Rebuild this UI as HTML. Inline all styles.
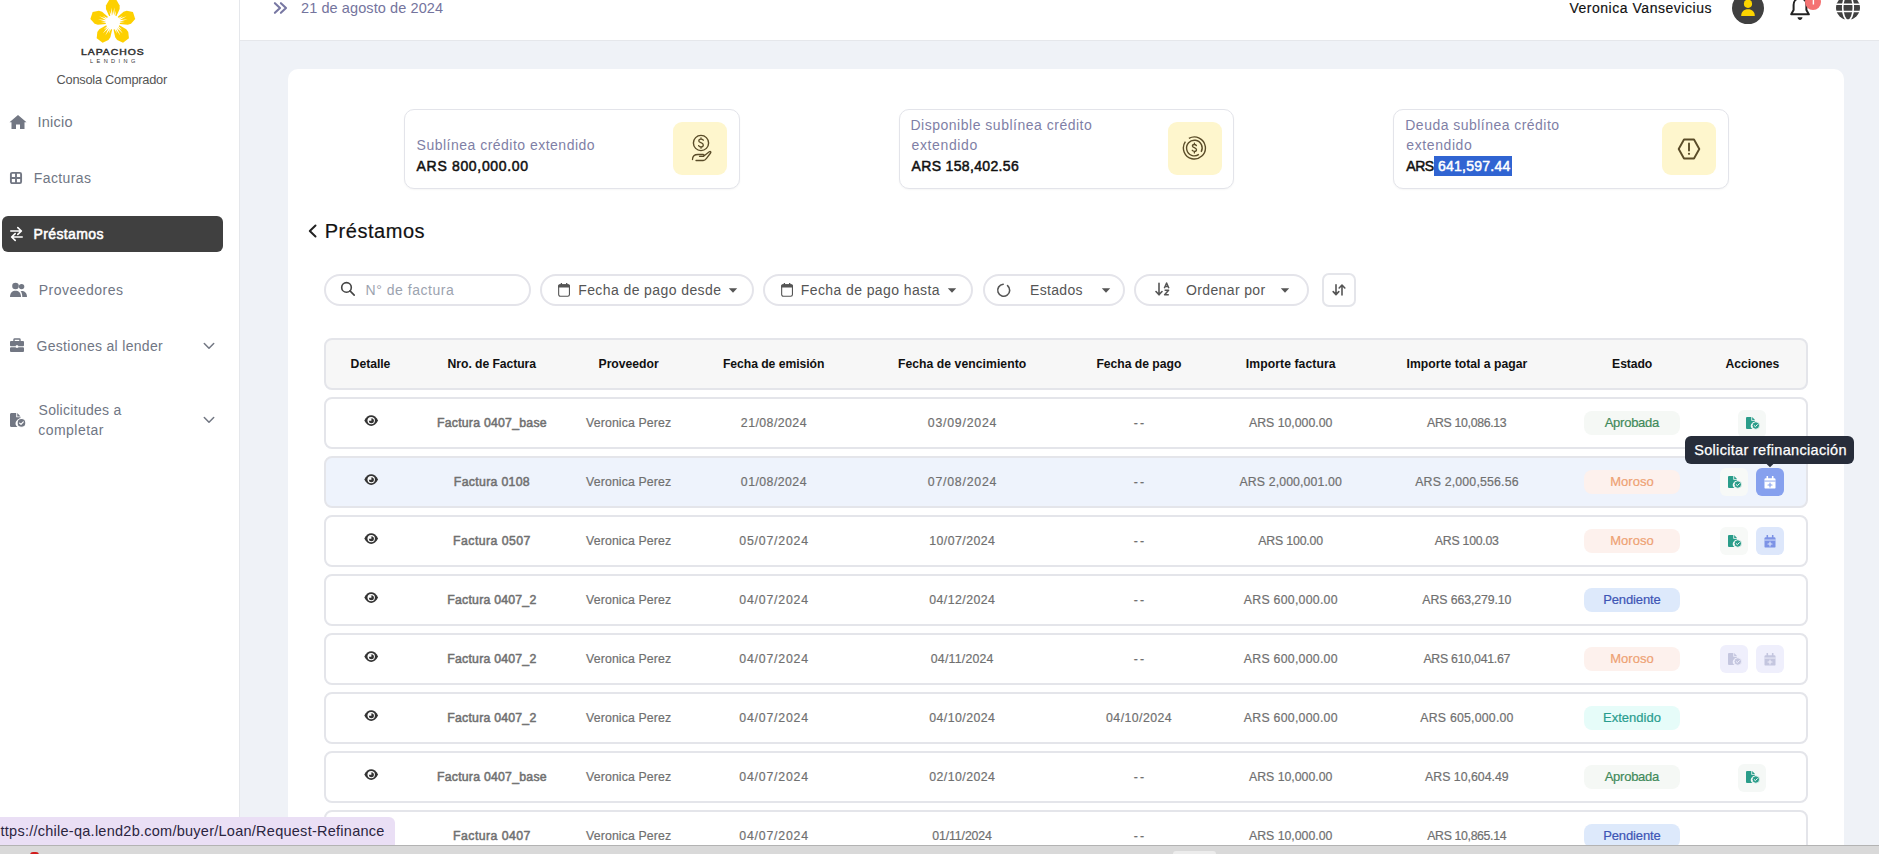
<!DOCTYPE html>
<html><head><meta charset="utf-8"><style>
*{box-sizing:border-box}
html,body{margin:0;padding:0}
body{width:1879px;height:854px;overflow:hidden;position:relative;background:#eff2f7;font-family:"Liberation Sans", sans-serif}
.t{position:absolute;white-space:nowrap}
.abs{position:absolute}
.row{position:absolute;left:324px;width:1484px;height:52px;border:2px solid #e4e5ea;border-radius:8px}
.badge{position:absolute;left:1584px;width:96px;height:24px;border-radius:8px}
.ab{position:absolute;width:28px;height:28px;border-radius:6px}
.pill{position:absolute;top:274px;height:32px;border:2px solid #e4e4ea;border-radius:16px;background:#fff}
.stat{position:absolute;top:109px;height:80px;border:1px solid #e3e4ea;border-radius:10px;background:#fff;box-shadow:0 1px 2px rgba(0,0,0,0.04)}
.ib{position:absolute;width:54px;height:53px;border-radius:9px;background:#fef6cd}
</style></head><body>
<div class="abs" style="left:0;top:0;width:240px;height:854px;background:#fff;border-right:1px solid #e5e7eb"></div>
<div class="abs" style="left:240px;top:0;width:1639px;height:41px;background:#fff;border-bottom:1px solid #e5e7eb"></div>
<div class="abs" style="left:288px;top:69px;width:1556px;height:900px;background:#fff;border-radius:10px"></div>
<svg style="position:absolute;left:0;top:0" width="240" height="50"><path d="M-3.8,-23.2 L3.8,-23.2 L7.1,-17.5 L7.1,-14 L3.6,-6 L-3.6,-6 L-7.1,-14 L-7.1,-17.5 Z" fill="#fdd000" transform="translate(112.8,22.4) rotate(0) scale(0.965)"/><path d="M-3.8,-23.2 L3.8,-23.2 L7.1,-17.5 L7.1,-14 L3.6,-6 L-3.6,-6 L-7.1,-14 L-7.1,-17.5 Z" fill="#fdd000" transform="translate(112.8,22.4) rotate(72) scale(0.965)"/><path d="M-3.8,-23.2 L3.8,-23.2 L7.1,-17.5 L7.1,-14 L3.6,-6 L-3.6,-6 L-7.1,-14 L-7.1,-17.5 Z" fill="#fdd000" transform="translate(112.8,22.4) rotate(144) scale(0.965)"/><path d="M-3.8,-23.2 L3.8,-23.2 L7.1,-17.5 L7.1,-14 L3.6,-6 L-3.6,-6 L-7.1,-14 L-7.1,-17.5 Z" fill="#fdd000" transform="translate(112.8,22.4) rotate(216) scale(0.965)"/><path d="M-3.8,-23.2 L3.8,-23.2 L7.1,-17.5 L7.1,-14 L3.6,-6 L-3.6,-6 L-7.1,-14 L-7.1,-17.5 Z" fill="#fdd000" transform="translate(112.8,22.4) rotate(288) scale(0.965)"/><circle cx="112.8" cy="22.4" r="7.2" fill="#fff"/><path d="M-1.5,0 L0,-12 L1.5,0 Z" fill="#fff" transform="translate(112.8,22.4) rotate(-16)"/><path d="M-1.5,0 L0,-15 L1.5,0 Z" fill="#fff" transform="translate(112.8,22.4) rotate(-6)"/><path d="M-1.5,0 L0,-15 L1.5,0 Z" fill="#fff" transform="translate(112.8,22.4) rotate(6)"/><path d="M-1.5,0 L0,-12 L1.5,0 Z" fill="#fff" transform="translate(112.8,22.4) rotate(16)"/><path d="M-1.8,0 L0,-10 L1.8,0 Z" fill="#fff" transform="translate(112.8,22.4) rotate(36)"/><path d="M-1.5,0 L0,-12 L1.5,0 Z" fill="#fff" transform="translate(112.8,22.4) rotate(56)"/><path d="M-1.5,0 L0,-15 L1.5,0 Z" fill="#fff" transform="translate(112.8,22.4) rotate(66)"/><path d="M-1.5,0 L0,-15 L1.5,0 Z" fill="#fff" transform="translate(112.8,22.4) rotate(78)"/><path d="M-1.5,0 L0,-12 L1.5,0 Z" fill="#fff" transform="translate(112.8,22.4) rotate(88)"/><path d="M-1.8,0 L0,-10 L1.8,0 Z" fill="#fff" transform="translate(112.8,22.4) rotate(108)"/><path d="M-1.5,0 L0,-12 L1.5,0 Z" fill="#fff" transform="translate(112.8,22.4) rotate(128)"/><path d="M-1.5,0 L0,-15 L1.5,0 Z" fill="#fff" transform="translate(112.8,22.4) rotate(138)"/><path d="M-1.5,0 L0,-15 L1.5,0 Z" fill="#fff" transform="translate(112.8,22.4) rotate(150)"/><path d="M-1.5,0 L0,-12 L1.5,0 Z" fill="#fff" transform="translate(112.8,22.4) rotate(160)"/><path d="M-1.8,0 L0,-10 L1.8,0 Z" fill="#fff" transform="translate(112.8,22.4) rotate(180)"/><path d="M-1.5,0 L0,-12 L1.5,0 Z" fill="#fff" transform="translate(112.8,22.4) rotate(200)"/><path d="M-1.5,0 L0,-15 L1.5,0 Z" fill="#fff" transform="translate(112.8,22.4) rotate(210)"/><path d="M-1.5,0 L0,-15 L1.5,0 Z" fill="#fff" transform="translate(112.8,22.4) rotate(222)"/><path d="M-1.5,0 L0,-12 L1.5,0 Z" fill="#fff" transform="translate(112.8,22.4) rotate(232)"/><path d="M-1.8,0 L0,-10 L1.8,0 Z" fill="#fff" transform="translate(112.8,22.4) rotate(252)"/><path d="M-1.5,0 L0,-12 L1.5,0 Z" fill="#fff" transform="translate(112.8,22.4) rotate(272)"/><path d="M-1.5,0 L0,-15 L1.5,0 Z" fill="#fff" transform="translate(112.8,22.4) rotate(282)"/><path d="M-1.5,0 L0,-15 L1.5,0 Z" fill="#fff" transform="translate(112.8,22.4) rotate(294)"/><path d="M-1.5,0 L0,-12 L1.5,0 Z" fill="#fff" transform="translate(112.8,22.4) rotate(304)"/><path d="M-1.8,0 L0,-10 L1.8,0 Z" fill="#fff" transform="translate(112.8,22.4) rotate(324)"/></svg>
<div class="abs" style="left:2px;top:216px;width:221px;height:36px;background:#404040;border-radius:6px"></div>
<div class="stat" style="left:404px;width:336px"></div>
<div class="stat" style="left:899px;width:335px"></div>
<div class="stat" style="left:1393px;width:336px"></div>
<div class="ib" style="left:673px;top:122px"></div>
<div class="ib" style="left:1168px;top:122px"></div>
<div class="ib" style="left:1662px;top:122px"></div>
<div class="abs" style="left:1434px;top:156px;width:78px;height:19.6px;background:#3064d2"></div>
<div class="pill" style="left:324px;width:207px"></div>
<div class="pill" style="left:540px;width:214px"></div>
<div class="pill" style="left:763px;width:210px"></div>
<div class="pill" style="left:983px;width:142px"></div>
<div class="pill" style="left:1134px;width:175px"></div>
<div class="abs" style="left:1322px;top:273px;width:34px;height:34px;border:2px solid #e4e5ea;border-radius:7px;background:#fff"></div>
<div class="abs" style="left:324px;top:338px;width:1484px;height:52px;background:#f7f7f7;border:2px solid #e4e5ea;border-radius:8px"></div>
<div class="row" style="top:397px;background:#fff"></div><svg style="position:absolute;left:363.5px;top:415.4px;" width="15" height="13" viewBox="0 0 15 13"><path d="M0.3,5.6 C2,2 4.6,0.2 7.2,0.2 C9.8,0.2 12.4,2 14.1,5.6 C12.4,9.2 9.8,11 7.2,11 C4.6,11 2,9.2 0.3,5.6 Z" fill="#333"/><circle cx="7.2" cy="5.6" r="3.7" fill="#fff"/><circle cx="7.4" cy="5.8" r="2.5" fill="#333"/><path d="M7.4,5.8 H4.6 A2.8,2.8 0 0 1 7.4,3 Z" fill="#fff"/></svg><div class="badge" style="top:411px;background:#f5f8f5"></div><div class="ab" style="left:1737.8px;top:409.5px;background:#f5f8f6"></div><svg style="position:absolute;left:1745.8px;top:416.8px;" width="15" height="14" viewBox="0 0 15 14"><path d="M1.3,0 H5.3 V3.7 H9 V5.2 A3.75,3.75 0 0 0 6.4,12 H1.3 C0.5,12 0,11.5 0,10.7 V1.3 C0,0.5 0.5,0 1.3,0 Z" fill="#2a9d8a"/><path d="M6.2,0 L9,2.9 H6.2 Z" fill="#2a9d8a"/><circle cx="9.8" cy="8.5" r="3.75" fill="#2a9d8a" stroke="#f5f8f6" stroke-width="0.9"/><path d="M8.2,8.6 L9.4,9.7 L11.4,7.6" fill="none" stroke="#f5f8f6" stroke-width="1" stroke-linecap="round" stroke-linejoin="round"/></svg><div class="row" style="top:456px;background:#eef3fc"></div><svg style="position:absolute;left:363.5px;top:474.4px;" width="15" height="13" viewBox="0 0 15 13"><path d="M0.3,5.6 C2,2 4.6,0.2 7.2,0.2 C9.8,0.2 12.4,2 14.1,5.6 C12.4,9.2 9.8,11 7.2,11 C4.6,11 2,9.2 0.3,5.6 Z" fill="#333"/><circle cx="7.2" cy="5.6" r="3.7" fill="#fff"/><circle cx="7.4" cy="5.8" r="2.5" fill="#333"/><path d="M7.4,5.8 H4.6 A2.8,2.8 0 0 1 7.4,3 Z" fill="#fff"/></svg><div class="badge" style="top:470px;background:#fdf1ed"></div><div class="ab" style="left:1720px;top:468px;background:#f7f9f7"></div><svg style="position:absolute;left:1728px;top:476px;" width="15" height="14" viewBox="0 0 15 14"><path d="M1.3,0 H5.3 V3.7 H9 V5.2 A3.75,3.75 0 0 0 6.4,12 H1.3 C0.5,12 0,11.5 0,10.7 V1.3 C0,0.5 0.5,0 1.3,0 Z" fill="#2a9d8a"/><path d="M6.2,0 L9,2.9 H6.2 Z" fill="#2a9d8a"/><circle cx="9.8" cy="8.5" r="3.75" fill="#2a9d8a" stroke="#f7f9f7" stroke-width="0.9"/><path d="M8.2,8.6 L9.4,9.7 L11.4,7.6" fill="none" stroke="#f7f9f7" stroke-width="1" stroke-linecap="round" stroke-linejoin="round"/></svg><div class="ab" style="left:1756px;top:468px;background:#86a0ee"></div><svg style="position:absolute;left:1764.3px;top:475.6px;" width="12" height="13" viewBox="0 0 12 13"><rect x="0.5" y="2.2" width="11" height="10.4" rx="1.2" fill="#fff"/><path d="M3.3,0.6 V3 M8.7,0.6 V3" stroke="#fff" stroke-width="1.6" stroke-linecap="round"/><rect x="0.5" y="4.6" width="11" height="0.9" fill="#86a0ee"/><path d="M6,7 V11 M4,9 H8" stroke="#86a0ee" stroke-width="1.1" stroke-linecap="round"/></svg><div class="row" style="top:515px;background:#fff"></div><svg style="position:absolute;left:363.5px;top:533.4px;" width="15" height="13" viewBox="0 0 15 13"><path d="M0.3,5.6 C2,2 4.6,0.2 7.2,0.2 C9.8,0.2 12.4,2 14.1,5.6 C12.4,9.2 9.8,11 7.2,11 C4.6,11 2,9.2 0.3,5.6 Z" fill="#333"/><circle cx="7.2" cy="5.6" r="3.7" fill="#fff"/><circle cx="7.4" cy="5.8" r="2.5" fill="#333"/><path d="M7.4,5.8 H4.6 A2.8,2.8 0 0 1 7.4,3 Z" fill="#fff"/></svg><div class="badge" style="top:529px;background:#fdf1ed"></div><div class="ab" style="left:1720px;top:527px;background:#f7f9f7"></div><svg style="position:absolute;left:1728px;top:535px;" width="15" height="14" viewBox="0 0 15 14"><path d="M1.3,0 H5.3 V3.7 H9 V5.2 A3.75,3.75 0 0 0 6.4,12 H1.3 C0.5,12 0,11.5 0,10.7 V1.3 C0,0.5 0.5,0 1.3,0 Z" fill="#2a9d8a"/><path d="M6.2,0 L9,2.9 H6.2 Z" fill="#2a9d8a"/><circle cx="9.8" cy="8.5" r="3.75" fill="#2a9d8a" stroke="#f7f9f7" stroke-width="0.9"/><path d="M8.2,8.6 L9.4,9.7 L11.4,7.6" fill="none" stroke="#f7f9f7" stroke-width="1" stroke-linecap="round" stroke-linejoin="round"/></svg><div class="ab" style="left:1756px;top:527px;background:#dde7fb"></div><svg style="position:absolute;left:1764.3px;top:534.6px;" width="12" height="13" viewBox="0 0 12 13"><rect x="0.5" y="2.2" width="11" height="10.4" rx="1.2" fill="#7d93e6"/><path d="M3.3,0.6 V3 M8.7,0.6 V3" stroke="#7d93e6" stroke-width="1.6" stroke-linecap="round"/><rect x="0.5" y="4.6" width="11" height="0.9" fill="#dde7fb"/><path d="M6,7 V11 M4,9 H8" stroke="#dde7fb" stroke-width="1.1" stroke-linecap="round"/></svg><div class="row" style="top:574px;background:#fff"></div><svg style="position:absolute;left:363.5px;top:592.4px;" width="15" height="13" viewBox="0 0 15 13"><path d="M0.3,5.6 C2,2 4.6,0.2 7.2,0.2 C9.8,0.2 12.4,2 14.1,5.6 C12.4,9.2 9.8,11 7.2,11 C4.6,11 2,9.2 0.3,5.6 Z" fill="#333"/><circle cx="7.2" cy="5.6" r="3.7" fill="#fff"/><circle cx="7.4" cy="5.8" r="2.5" fill="#333"/><path d="M7.4,5.8 H4.6 A2.8,2.8 0 0 1 7.4,3 Z" fill="#fff"/></svg><div class="badge" style="top:588px;background:#dde9fb"></div><div class="row" style="top:633px;background:#fff"></div><svg style="position:absolute;left:363.5px;top:651.4px;" width="15" height="13" viewBox="0 0 15 13"><path d="M0.3,5.6 C2,2 4.6,0.2 7.2,0.2 C9.8,0.2 12.4,2 14.1,5.6 C12.4,9.2 9.8,11 7.2,11 C4.6,11 2,9.2 0.3,5.6 Z" fill="#333"/><circle cx="7.2" cy="5.6" r="3.7" fill="#fff"/><circle cx="7.4" cy="5.8" r="2.5" fill="#333"/><path d="M7.4,5.8 H4.6 A2.8,2.8 0 0 1 7.4,3 Z" fill="#fff"/></svg><div class="badge" style="top:647px;background:#fdf1ed"></div><div class="ab" style="left:1720px;top:645px;background:#efeffc"></div><svg style="position:absolute;left:1728px;top:653px;" width="15" height="14" viewBox="0 0 15 14"><path d="M1.3,0 H5.3 V3.7 H9 V5.2 A3.75,3.75 0 0 0 6.4,12 H1.3 C0.5,12 0,11.5 0,10.7 V1.3 C0,0.5 0.5,0 1.3,0 Z" fill="#c4c6df"/><path d="M6.2,0 L9,2.9 H6.2 Z" fill="#c4c6df"/><circle cx="9.8" cy="8.5" r="3.75" fill="#c4c6df" stroke="#efeffc" stroke-width="0.9"/><path d="M8.2,8.6 L9.4,9.7 L11.4,7.6" fill="none" stroke="#efeffc" stroke-width="1" stroke-linecap="round" stroke-linejoin="round"/></svg><div class="ab" style="left:1756px;top:645px;background:#efeffc"></div><svg style="position:absolute;left:1764.3px;top:652.6px;" width="12" height="13" viewBox="0 0 12 13"><rect x="0.5" y="2.2" width="11" height="10.4" rx="1.2" fill="#c4c6df"/><path d="M3.3,0.6 V3 M8.7,0.6 V3" stroke="#c4c6df" stroke-width="1.6" stroke-linecap="round"/><rect x="0.5" y="4.6" width="11" height="0.9" fill="#efeffc"/><path d="M6,7 V11 M4,9 H8" stroke="#efeffc" stroke-width="1.1" stroke-linecap="round"/></svg><div class="row" style="top:692px;background:#fff"></div><svg style="position:absolute;left:363.5px;top:710.4px;" width="15" height="13" viewBox="0 0 15 13"><path d="M0.3,5.6 C2,2 4.6,0.2 7.2,0.2 C9.8,0.2 12.4,2 14.1,5.6 C12.4,9.2 9.8,11 7.2,11 C4.6,11 2,9.2 0.3,5.6 Z" fill="#333"/><circle cx="7.2" cy="5.6" r="3.7" fill="#fff"/><circle cx="7.4" cy="5.8" r="2.5" fill="#333"/><path d="M7.4,5.8 H4.6 A2.8,2.8 0 0 1 7.4,3 Z" fill="#fff"/></svg><div class="badge" style="top:706px;background:#e6fcf9"></div><div class="row" style="top:751px;background:#fff"></div><svg style="position:absolute;left:363.5px;top:769.4px;" width="15" height="13" viewBox="0 0 15 13"><path d="M0.3,5.6 C2,2 4.6,0.2 7.2,0.2 C9.8,0.2 12.4,2 14.1,5.6 C12.4,9.2 9.8,11 7.2,11 C4.6,11 2,9.2 0.3,5.6 Z" fill="#333"/><circle cx="7.2" cy="5.6" r="3.7" fill="#fff"/><circle cx="7.4" cy="5.8" r="2.5" fill="#333"/><path d="M7.4,5.8 H4.6 A2.8,2.8 0 0 1 7.4,3 Z" fill="#fff"/></svg><div class="badge" style="top:765px;background:#f5f8f5"></div><div class="ab" style="left:1737.8px;top:763.5px;background:#f5f8f6"></div><svg style="position:absolute;left:1745.8px;top:770.8px;" width="15" height="14" viewBox="0 0 15 14"><path d="M1.3,0 H5.3 V3.7 H9 V5.2 A3.75,3.75 0 0 0 6.4,12 H1.3 C0.5,12 0,11.5 0,10.7 V1.3 C0,0.5 0.5,0 1.3,0 Z" fill="#2a9d8a"/><path d="M6.2,0 L9,2.9 H6.2 Z" fill="#2a9d8a"/><circle cx="9.8" cy="8.5" r="3.75" fill="#2a9d8a" stroke="#f5f8f6" stroke-width="0.9"/><path d="M8.2,8.6 L9.4,9.7 L11.4,7.6" fill="none" stroke="#f5f8f6" stroke-width="1" stroke-linecap="round" stroke-linejoin="round"/></svg><div class="row" style="top:810px;background:#fff"></div><svg style="position:absolute;left:363.5px;top:828.4px;" width="15" height="13" viewBox="0 0 15 13"><path d="M0.3,5.6 C2,2 4.6,0.2 7.2,0.2 C9.8,0.2 12.4,2 14.1,5.6 C12.4,9.2 9.8,11 7.2,11 C4.6,11 2,9.2 0.3,5.6 Z" fill="#333"/><circle cx="7.2" cy="5.6" r="3.7" fill="#fff"/><circle cx="7.4" cy="5.8" r="2.5" fill="#333"/><path d="M7.4,5.8 H4.6 A2.8,2.8 0 0 1 7.4,3 Z" fill="#fff"/></svg><div class="badge" style="top:824px;background:#dde9fb"></div>
<svg style="position:absolute;left:9px;top:114px;" width="18" height="16" viewBox="0 0 18 16"><path d="M9,1 L17.5,8.2 L15.5,8.2 L15.5,15 L11,15 L11,10.5 L7,10.5 L7,15 L2.5,15 L2.5,8.2 L0.5,8.2 Z" fill="#727783"/></svg><svg style="position:absolute;left:9px;top:171px;" width="14" height="14" viewBox="0 0 14 14"><rect x="1.9" y="1.9" width="10.2" height="10.2" rx="1.3" fill="none" stroke="#727783" stroke-width="1.9"/><path d="M7,2 V12 M2,7 H12" stroke="#727783" stroke-width="1.9"/></svg><svg style="position:absolute;left:9px;top:226px;" width="15" height="16" viewBox="0 0 15 16"><path d="M1.8,5 H12.3 M8.8,1.6 L12.4,5 L8.8,8.4 M13.2,11 H2.7 M6.2,7.6 L2.6,11 L6.2,14.4" fill="none" stroke="#fff" stroke-width="1.6" stroke-linecap="round" stroke-linejoin="round"/></svg><svg style="position:absolute;left:9px;top:282px;" width="19" height="16" viewBox="0 0 19 16"><circle cx="6.5" cy="4" r="3.3" fill="#727783"/><circle cx="12.6" cy="4.6" r="2.7" fill="#727783"/><path d="M1,15 C1,10.5 3.5,8.7 6.5,8.7 C9.5,8.7 12,10.5 12,15 Z" fill="#727783"/><path d="M12.6,8.9 C15.6,8.9 18,10.6 18,15 L13.3,15 C13.3,12.5 12.8,10.5 11.6,9.2 Z" fill="#727783"/></svg><svg style="position:absolute;left:9px;top:338px;" width="16" height="15" viewBox="0 0 16 15"><path d="M5,3 V1.6 C5,1.2 5.3,1 5.7,1 H10.3 C10.7,1 11,1.2 11,1.6 V3" fill="none" stroke="#727783" stroke-width="1.4"/><rect x="1" y="3" width="14" height="5.2" rx="1" fill="#727783"/><rect x="1" y="9.2" width="14" height="4.8" rx="1" fill="#727783"/><rect x="6.8" y="7.2" width="2.4" height="2.6" rx="0.5" fill="#fff"/></svg><svg style="position:absolute;left:9.9px;top:412.8px;" width="18" height="16" viewBox="0 0 18 16"><g transform="scale(1.17)"><path d="M1.3,0 H5.3 V3.7 H9 V5.2 A3.75,3.75 0 0 0 6.4,12 H1.3 C0.5,12 0,11.5 0,10.7 V1.3 C0,0.5 0.5,0 1.3,0 Z" fill="#727783"/><path d="M6.2,0 L9,2.9 H6.2 Z" fill="#727783"/><circle cx="9.8" cy="8.5" r="3.75" fill="#727783" stroke="#fff" stroke-width="0.9"/><path d="M8.2,8.6 L9.4,9.7 L11.4,7.6" fill="none" stroke="#fff" stroke-width="1" stroke-linecap="round" stroke-linejoin="round"/></g></svg><svg style="position:absolute;left:203px;top:342px;" width="12" height="9" viewBox="0 0 12 9"><path d="M1.3,1.5 L6,6.3 L10.7,1.5" fill="none" stroke="#727783" stroke-width="1.5" stroke-linecap="round" stroke-linejoin="round"/></svg><svg style="position:absolute;left:203px;top:416px;" width="12" height="9" viewBox="0 0 12 9"><path d="M1.3,1.5 L6,6.3 L10.7,1.5" fill="none" stroke="#727783" stroke-width="1.5" stroke-linecap="round" stroke-linejoin="round"/></svg><svg style="position:absolute;left:272px;top:1px;" width="16" height="14" viewBox="0 0 16 14"><path d="M2.9,2.2 L8,7 L2.9,11.8 M8.9,2.2 L14,7 L8.9,11.8" fill="none" stroke="#7878a3" stroke-width="2.1" stroke-linecap="round" stroke-linejoin="round"/></svg><svg style="position:absolute;left:1732px;top:0px;" width="32" height="25" viewBox="0 0 32 25"><circle cx="16" cy="8.1" r="16" fill="#404040"/><circle cx="16" cy="3.8" r="4.1" fill="#fcd400"/><path d="M9.2,16 C9.2,11.6 12,9.3 16,9.3 C20,9.3 22.8,11.6 22.8,16 Z" fill="#fcd400"/></svg><svg style="position:absolute;left:1788px;top:-2px;" width="24" height="23" viewBox="0 0 24 23"><path d="M3.2,16.3 L5.6,12 V7 C5.6,3 8.3,0.4 12,0.4 C15.7,0.4 18.4,3 18.4,7 V12 L20.8,16.3 Z" fill="none" stroke="#222" stroke-width="2" stroke-linejoin="round"/><path d="M9.5,19.2 H14.5 C14.2,21 13.2,22 12,22 C10.8,22 9.8,21 9.5,19.2 Z" fill="#222"/></svg><svg style="position:absolute;left:1805px;top:-6px;" width="16" height="16" viewBox="0 0 16 16"><circle cx="8" cy="8" r="8" fill="#f47272"/><path d="M8.4,4 V10.5" stroke="#fff" stroke-width="1.4"/></svg><svg style="position:absolute;left:1835px;top:-5px;" width="26" height="26" viewBox="0 0 26 26"><circle cx="13" cy="12.7" r="12" fill="#404040"/><path d="M0.5,9.2 H25.5 M0.5,16.5 H25.5" stroke="#fff" stroke-width="1.6"/><ellipse cx="13" cy="12.7" rx="5.3" ry="12.6" fill="none" stroke="#fff" stroke-width="1.6"/></svg><svg style="position:absolute;left:690px;top:132px;" width="22" height="30" viewBox="0 0 22 30"><circle cx="11" cy="11" r="7.6" fill="none" stroke="#5a4c28" stroke-width="1.4"/><path d="M13.3,8.2 C12.8,7.4 12,7.1 11,7.1 C9.6,7.1 8.8,7.9 8.8,8.9 C8.8,11 13.3,10.4 13.3,12.9 C13.3,14 12.4,14.8 11,14.8 C9.9,14.8 9.1,14.4 8.6,13.6 M11,5.8 V7.1 M11,14.8 V16.2" fill="none" stroke="#5a4c28" stroke-width="1.3" stroke-linecap="round"/><path d="M2.5,27.5 C2.5,24 5,22.5 8,22.5 H13.2 C14.2,22.5 14.4,24.3 13.2,24.3 H9.5 M14.5,23.5 L19.3,19.8 C20.5,19 21.3,20 20.6,21 L16.5,26.3 C15.7,27.4 14.8,28.5 13.2,28.5 H6" fill="none" stroke="#5a4c28" stroke-width="1.3" stroke-linecap="round" stroke-linejoin="round"/></svg><svg style="position:absolute;left:1182px;top:136px;" width="25" height="25" viewBox="0 0 25 25"><path d="M6.9,2.47 A11,11 0 1 1 3.39,5.69" fill="none" stroke="#5a4c28" stroke-width="1.4"/><path d="M16.88,18.39 A7.8,7.8 0 1 1 19.15,15.9" fill="none" stroke="#5a4c28" stroke-width="1.4"/><path d="M14.4,9.6 C14,8.9 13.3,8.5 12.4,8.5 C11.2,8.5 10.4,9.2 10.4,10.1 C10.4,12 14.5,11.4 14.5,13.7 C14.5,14.7 13.7,15.4 12.4,15.4 C11.4,15.4 10.6,15 10.2,14.3 M12.4,7.1 V8.5 M12.4,15.4 V16.9" fill="none" stroke="#5a4c28" stroke-width="1.3" stroke-linecap="round"/></svg><svg style="position:absolute;left:1677px;top:138px;" width="24" height="22" viewBox="0 0 24 22"><path d="M7,1.5 H17 L22.3,11 L17,20.5 H7 L1.7,11 Z" fill="none" stroke="#5a4c28" stroke-width="1.9" stroke-linejoin="round"/><path d="M12,5.5 V12.5" stroke="#5a4c28" stroke-width="1.9" stroke-linecap="round"/><circle cx="12" cy="15.8" r="1.1" fill="#5a4c28"/></svg><svg style="position:absolute;left:306px;top:223px;" width="12" height="16" viewBox="0 0 12 16"><path d="M9.5,2.5 L3.8,8 L9.5,13.5" fill="none" stroke="#222" stroke-width="2" stroke-linecap="round" stroke-linejoin="round"/></svg><svg style="position:absolute;left:339px;top:280px;" width="18" height="18" viewBox="0 0 18 18"><circle cx="7.5" cy="7.4" r="4.8" fill="none" stroke="#444" stroke-width="1.6"/><path d="M11,10.9 L15.2,15.1" stroke="#444" stroke-width="1.6" stroke-linecap="round"/></svg><svg style="position:absolute;left:557px;top:281px;" width="14" height="17" viewBox="0 0 14 17"><rect x="1.65" y="3.9" width="10.8" height="11.35" rx="1.7" fill="none" stroke="#555" stroke-width="1.1"/><path d="M1.1,6.6 V5.2 C1.1,4.1 1.9,3.35 2.9,3.35 H11.2 C12.2,3.35 13,4.1 13,5.2 V6.6 Z" fill="#555"/><path d="M4.4,1.9 V4 M9.7,1.9 V4" stroke="#555" stroke-width="1.3"/></svg><svg style="position:absolute;left:780px;top:281px;" width="14" height="17" viewBox="0 0 14 17"><rect x="1.65" y="3.9" width="10.8" height="11.35" rx="1.7" fill="none" stroke="#555" stroke-width="1.1"/><path d="M1.1,6.6 V5.2 C1.1,4.1 1.9,3.35 2.9,3.35 H11.2 C12.2,3.35 13,4.1 13,5.2 V6.6 Z" fill="#555"/><path d="M4.4,1.9 V4 M9.7,1.9 V4" stroke="#555" stroke-width="1.3"/></svg><svg style="position:absolute;left:728px;top:287px;" width="10" height="7" viewBox="0 0 10 7"><path d="M0.8,1.2 H9.2 L5,5.8 Z" fill="#555"/></svg><svg style="position:absolute;left:947px;top:287px;" width="10" height="7" viewBox="0 0 10 7"><path d="M0.8,1.2 H9.2 L5,5.8 Z" fill="#555"/></svg><svg style="position:absolute;left:1100.8px;top:287px;" width="10" height="7" viewBox="0 0 10 7"><path d="M0.8,1.2 H9.2 L5,5.8 Z" fill="#555"/></svg><svg style="position:absolute;left:1279.8px;top:287px;" width="10" height="7" viewBox="0 0 10 7"><path d="M0.8,1.2 H9.2 L5,5.8 Z" fill="#555"/></svg><svg style="position:absolute;left:995px;top:282px;" width="17" height="17" viewBox="0 0 17 17"><path d="M12.56,3.6 A6,6 0 1 1 8.18,2.22" fill="none" stroke="#555" stroke-width="1.6" stroke-linecap="round"/></svg><svg style="position:absolute;left:1155.3px;top:282px;" width="17" height="15" viewBox="0 0 17 15"><path d="M4,1.3 V12.5 M1,9.5 L4,12.8 L7,9.5" fill="none" stroke="#555" stroke-width="1.6" stroke-linecap="round" stroke-linejoin="round"/><path d="M9.3,6.2 L11.6,1 L13.9,6.2 M10,4.5 H13.2" fill="none" stroke="#555" stroke-width="1.5" stroke-linejoin="round"/><path d="M9.6,8.2 H13.6 L9.6,12.8 H13.8" fill="none" stroke="#555" stroke-width="1.5" stroke-linejoin="round"/></svg><svg style="position:absolute;left:1332px;top:284px;" width="14" height="12" viewBox="0 0 14 12"><path d="M4,0.8 V10.2 M1.2,7.6 L4,10.6 L6.8,7.6 M10,11 V1.4 M7.2,4 L10,1 L12.8,4" fill="none" stroke="#555" stroke-width="1.6" stroke-linecap="round" stroke-linejoin="round"/></svg>
<div class="abs" style="left:1685px;top:436px;width:169px;height:28px;background:#272d3a;border-radius:6px"></div>
<svg style="position:absolute;left:1765px;top:463.5px" width="10" height="4"><path d="M1.6,0 L5,3.3 L8.4,0 Z" fill="#272d3a"/></svg>
<div class="abs" style="left:0;top:817px;width:395px;height:28px;background:#eadff5;border-top-right-radius:6px"></div>
<div class="abs" style="left:0;top:845px;width:1879px;height:9px;background:#d9d9d9;border-top:1px solid #b3b3b3"></div>
<div class="abs" style="left:1173px;top:851px;width:43px;height:6px;background:#ececec;border-radius:4px"></div>
<div class="abs" style="left:30px;top:852px;width:9px;height:6px;background:#d21d1d;border-radius:5px"></div>
<div class="t" id="date" style="top:-1.22px;font-size:14.5px;line-height:19px;font-weight:400;color:#74749d;letter-spacing:0.093px;left:301.00px;">21 de agosto de 2024</div><div class="t" id="user" style="top:-1.05px;font-size:14px;line-height:18px;font-weight:400;color:#111;letter-spacing:0.527px;left:1569.40px;-webkit-text-stroke:0.15px #111;">Veronica Vansevicius</div><div class="t" id="consola" style="top:71.16px;font-size:12.8px;line-height:17px;font-weight:400;color:#555;letter-spacing:-0.247px;left:56.60px;">Consola Comprador</div><div class="t" id="n_inicio" style="top:112.68px;font-size:14.5px;line-height:19px;font-weight:400;color:#707684;letter-spacing:0.283px;left:37.40px;">Inicio</div><div class="t" id="n_fact" style="top:169.05px;font-size:14px;line-height:18px;font-weight:400;color:#707684;letter-spacing:0.377px;left:33.80px;">Facturas</div><div class="t" id="n_prest" style="top:224.85px;font-size:14px;line-height:18px;font-weight:400;color:#fff;letter-spacing:0.380px;left:33.50px;-webkit-text-stroke:0.55px #fff;">Préstamos</div><div class="t" id="n_prov" style="top:280.85px;font-size:14px;line-height:18px;font-weight:400;color:#707684;letter-spacing:0.472px;left:38.80px;">Proveedores</div><div class="t" id="n_gest" style="top:337.15px;font-size:14px;line-height:18px;font-weight:400;color:#707684;letter-spacing:0.308px;left:36.50px;">Gestiones al lender</div><div class="t" id="n_sol1" style="top:401.05px;font-size:14px;line-height:18px;font-weight:400;color:#707684;letter-spacing:0.292px;left:38.50px;">Solicitudes a</div><div class="t" id="n_sol2" style="top:420.95px;font-size:14px;line-height:18px;font-weight:400;color:#707684;letter-spacing:0.474px;left:38.20px;">completar</div><div class="t" id="c1l" style="top:136.35px;font-size:14px;line-height:18px;font-weight:400;color:#7f7fa6;letter-spacing:0.488px;left:416.60px;">Sublínea crédito extendido</div><div class="t" id="c1v" style="top:157.05px;font-size:14px;line-height:18px;font-weight:400;color:#111;letter-spacing:0.672px;left:416.60px;-webkit-text-stroke:0.5px #111;">ARS 800,000.00</div><div class="t" id="c2l1" style="top:116.45px;font-size:14px;line-height:18px;font-weight:400;color:#7f7fa6;letter-spacing:0.507px;left:910.50px;">Disponible sublínea crédito</div><div class="t" id="c2l2" style="top:136.05px;font-size:14px;line-height:18px;font-weight:400;color:#7f7fa6;letter-spacing:0.634px;left:911.50px;">extendido</div><div class="t" id="c2v" style="top:157.05px;font-size:14px;line-height:18px;font-weight:400;color:#111;letter-spacing:0.349px;left:911.50px;-webkit-text-stroke:0.5px #111;">ARS 158,402.56</div><div class="t" id="c3l1" style="top:116.45px;font-size:14px;line-height:18px;font-weight:400;color:#7f7fa6;letter-spacing:0.467px;left:1405.30px;">Deuda sublínea crédito</div><div class="t" id="c3l2" style="top:136.05px;font-size:14px;line-height:18px;font-weight:400;color:#7f7fa6;letter-spacing:0.596px;left:1406.30px;">extendido</div><div class="t" id="c3v1" style="top:157.05px;font-size:14px;line-height:18px;font-weight:400;color:#111;letter-spacing:-0.500px;left:1406.30px;-webkit-text-stroke:0.5px #111;">ARS</div><div class="t" id="c3v2" style="top:157.05px;font-size:14px;line-height:18px;font-weight:400;color:#fff;letter-spacing:0.235px;left:1438.00px;-webkit-text-stroke:0.5px #fff;">641,597.44</div><div class="t" id="title" style="top:217.77px;font-size:20px;line-height:26px;font-weight:400;color:#111;letter-spacing:0.539px;left:324.70px;-webkit-text-stroke:0.2px #111;">Préstamos</div><div class="t" id="f_search" style="top:280.95px;font-size:14px;line-height:18px;font-weight:400;color:#9ca3af;letter-spacing:0.535px;left:365.50px;">N° de factura</div><div class="t" id="f_desde" style="top:281.05px;font-size:14px;line-height:18px;font-weight:400;color:#555;letter-spacing:0.408px;left:578.20px;">Fecha de pago desde</div><div class="t" id="f_hasta" style="top:281.05px;font-size:14px;line-height:18px;font-weight:400;color:#555;letter-spacing:0.402px;left:800.80px;">Fecha de pago hasta</div><div class="t" id="f_est" style="top:281.05px;font-size:14px;line-height:18px;font-weight:400;color:#555;letter-spacing:0.319px;left:1030.00px;">Estados</div><div class="t" id="f_ord" style="top:281.05px;font-size:14px;line-height:18px;font-weight:400;color:#555;letter-spacing:0.368px;left:1186.00px;">Ordenar por</div><div class="t" id="h0" style="top:355.67px;font-size:12.2px;line-height:16px;font-weight:700;color:#111;letter-spacing:-0.031px;left:70.50px;width:600px;text-align:center;text-indent:-0.031px;">Detalle</div><div class="t" id="h1" style="top:355.67px;font-size:12.2px;line-height:16px;font-weight:700;color:#111;letter-spacing:-0.073px;left:191.80px;width:600px;text-align:center;text-indent:-0.073px;">Nro. de Factura</div><div class="t" id="h2" style="top:355.67px;font-size:12.2px;line-height:16px;font-weight:700;color:#111;letter-spacing:-0.018px;left:328.60px;width:600px;text-align:center;text-indent:-0.018px;">Proveedor</div><div class="t" id="h3" style="top:355.67px;font-size:12.2px;line-height:16px;font-weight:700;color:#111;letter-spacing:-0.055px;left:473.70px;width:600px;text-align:center;text-indent:-0.055px;">Fecha de emisión</div><div class="t" id="h4" style="top:355.67px;font-size:12.2px;line-height:16px;font-weight:700;color:#111;letter-spacing:0.048px;left:662.10px;width:600px;text-align:center;text-indent:0.048px;">Fecha de vencimiento</div><div class="t" id="h5" style="top:355.67px;font-size:12.2px;line-height:16px;font-weight:700;color:#111;letter-spacing:-0.032px;left:838.90px;width:600px;text-align:center;text-indent:-0.032px;">Fecha de pago</div><div class="t" id="h6" style="top:355.67px;font-size:12.2px;line-height:16px;font-weight:700;color:#111;letter-spacing:0.076px;left:990.70px;width:600px;text-align:center;text-indent:0.076px;">Importe factura</div><div class="t" id="h7" style="top:355.67px;font-size:12.2px;line-height:16px;font-weight:700;color:#111;letter-spacing:0.010px;left:1166.90px;width:600px;text-align:center;text-indent:0.010px;">Importe total a pagar</div><div class="t" id="h8" style="top:355.67px;font-size:12.2px;line-height:16px;font-weight:700;color:#111;letter-spacing:-0.098px;left:1332.20px;width:600px;text-align:center;text-indent:-0.098px;">Estado</div><div class="t" id="h9" style="top:355.67px;font-size:12.2px;line-height:16px;font-weight:700;color:#111;letter-spacing:-0.059px;left:1452.40px;width:600px;text-align:center;text-indent:-0.059px;">Acciones</div><div class="t" id="r0c1" style="top:414.74px;font-size:12.3px;line-height:16px;font-weight:400;color:#707070;letter-spacing:0.230px;left:191.80px;width:600px;text-align:center;text-indent:0.230px;-webkit-text-stroke:0.5px #707070;">Factura 0407_base</div><div class="t" id="r0c2" style="top:414.74px;font-size:12.3px;line-height:16px;font-weight:400;color:#707070;letter-spacing:0.120px;left:328.60px;width:600px;text-align:center;text-indent:0.120px;-webkit-text-stroke:0.2px #707070;">Veronica Perez</div><div class="t" id="r0c3" style="top:414.74px;font-size:12.3px;line-height:16px;font-weight:400;color:#707070;letter-spacing:0.455px;left:473.70px;width:600px;text-align:center;text-indent:0.455px;-webkit-text-stroke:0.2px #707070;">21/08/2024</div><div class="t" id="r0c4" style="top:414.74px;font-size:12.3px;line-height:16px;font-weight:400;color:#707070;letter-spacing:0.788px;left:662.10px;width:600px;text-align:center;text-indent:0.788px;-webkit-text-stroke:0.2px #707070;">03/09/2024</div><div class="t" id="r0c5" style="top:414.74px;font-size:12.3px;line-height:16px;font-weight:400;color:#707070;letter-spacing:2.205px;left:838.90px;width:600px;text-align:center;text-indent:2.205px;-webkit-text-stroke:0.2px #707070;">--</div><div class="t" id="r0c6" style="top:414.74px;font-size:12.3px;line-height:16px;font-weight:400;color:#707070;letter-spacing:0.003px;left:990.70px;width:600px;text-align:center;text-indent:0.003px;-webkit-text-stroke:0.2px #707070;">ARS 10,000.00</div><div class="t" id="r0c7" style="top:414.74px;font-size:12.3px;line-height:16px;font-weight:400;color:#707070;letter-spacing:-0.314px;left:1166.90px;width:600px;text-align:center;text-indent:-0.314px;-webkit-text-stroke:0.2px #707070;">ARS 10,086.13</div><div class="t" id="r1c1" style="top:473.74px;font-size:12.3px;line-height:16px;font-weight:400;color:#707070;letter-spacing:0.307px;left:191.80px;width:600px;text-align:center;text-indent:0.307px;-webkit-text-stroke:0.5px #707070;">Factura 0108</div><div class="t" id="r1c2" style="top:473.74px;font-size:12.3px;line-height:16px;font-weight:400;color:#707070;letter-spacing:0.120px;left:328.60px;width:600px;text-align:center;text-indent:0.120px;-webkit-text-stroke:0.2px #707070;">Veronica Perez</div><div class="t" id="r1c3" style="top:473.74px;font-size:12.3px;line-height:16px;font-weight:400;color:#707070;letter-spacing:0.455px;left:473.70px;width:600px;text-align:center;text-indent:0.455px;-webkit-text-stroke:0.2px #707070;">01/08/2024</div><div class="t" id="r1c4" style="top:473.74px;font-size:12.3px;line-height:16px;font-weight:400;color:#707070;letter-spacing:0.788px;left:662.10px;width:600px;text-align:center;text-indent:0.788px;-webkit-text-stroke:0.2px #707070;">07/08/2024</div><div class="t" id="r1c5" style="top:473.74px;font-size:12.3px;line-height:16px;font-weight:400;color:#707070;letter-spacing:2.205px;left:838.90px;width:600px;text-align:center;text-indent:2.205px;-webkit-text-stroke:0.2px #707070;">--</div><div class="t" id="r1c6" style="top:473.74px;font-size:12.3px;line-height:16px;font-weight:400;color:#707070;letter-spacing:0.123px;left:990.70px;width:600px;text-align:center;text-indent:0.123px;-webkit-text-stroke:0.2px #707070;">ARS 2,000,001.00</div><div class="t" id="r1c7" style="top:473.74px;font-size:12.3px;line-height:16px;font-weight:400;color:#707070;letter-spacing:0.189px;left:1166.90px;width:600px;text-align:center;text-indent:0.189px;-webkit-text-stroke:0.2px #707070;">ARS 2,000,556.56</div><div class="t" id="r2c1" style="top:532.74px;font-size:12.3px;line-height:16px;font-weight:400;color:#707070;letter-spacing:0.444px;left:191.80px;width:600px;text-align:center;text-indent:0.444px;-webkit-text-stroke:0.5px #707070;">Factura 0507</div><div class="t" id="r2c2" style="top:532.74px;font-size:12.3px;line-height:16px;font-weight:400;color:#707070;letter-spacing:0.120px;left:328.60px;width:600px;text-align:center;text-indent:0.120px;-webkit-text-stroke:0.2px #707070;">Veronica Perez</div><div class="t" id="r2c3" style="top:532.74px;font-size:12.3px;line-height:16px;font-weight:400;color:#707070;letter-spacing:0.788px;left:473.70px;width:600px;text-align:center;text-indent:0.788px;-webkit-text-stroke:0.2px #707070;">05/07/2024</div><div class="t" id="r2c4" style="top:532.74px;font-size:12.3px;line-height:16px;font-weight:400;color:#707070;letter-spacing:0.455px;left:662.10px;width:600px;text-align:center;text-indent:0.455px;-webkit-text-stroke:0.2px #707070;">10/07/2024</div><div class="t" id="r2c5" style="top:532.74px;font-size:12.3px;line-height:16px;font-weight:400;color:#707070;letter-spacing:2.205px;left:838.90px;width:600px;text-align:center;text-indent:2.205px;-webkit-text-stroke:0.2px #707070;">--</div><div class="t" id="r2c6" style="top:532.74px;font-size:12.3px;line-height:16px;font-weight:400;color:#707070;letter-spacing:-0.175px;left:990.70px;width:600px;text-align:center;text-indent:-0.175px;-webkit-text-stroke:0.2px #707070;">ARS 100.00</div><div class="t" id="r2c7" style="top:532.74px;font-size:12.3px;line-height:16px;font-weight:400;color:#707070;letter-spacing:-0.253px;left:1166.90px;width:600px;text-align:center;text-indent:-0.253px;-webkit-text-stroke:0.2px #707070;">ARS 100.03</div><div class="t" id="r3c1" style="top:591.74px;font-size:12.3px;line-height:16px;font-weight:400;color:#707070;letter-spacing:0.215px;left:191.80px;width:600px;text-align:center;text-indent:0.215px;-webkit-text-stroke:0.5px #707070;">Factura 0407_2</div><div class="t" id="r3c2" style="top:591.74px;font-size:12.3px;line-height:16px;font-weight:400;color:#707070;letter-spacing:0.120px;left:328.60px;width:600px;text-align:center;text-indent:0.120px;-webkit-text-stroke:0.2px #707070;">Veronica Perez</div><div class="t" id="r3c3" style="top:591.74px;font-size:12.3px;line-height:16px;font-weight:400;color:#707070;letter-spacing:0.788px;left:473.70px;width:600px;text-align:center;text-indent:0.788px;-webkit-text-stroke:0.2px #707070;">04/07/2024</div><div class="t" id="r3c4" style="top:591.74px;font-size:12.3px;line-height:16px;font-weight:400;color:#707070;letter-spacing:0.455px;left:662.10px;width:600px;text-align:center;text-indent:0.455px;-webkit-text-stroke:0.2px #707070;">04/12/2024</div><div class="t" id="r3c5" style="top:591.74px;font-size:12.3px;line-height:16px;font-weight:400;color:#707070;letter-spacing:2.205px;left:838.90px;width:600px;text-align:center;text-indent:2.205px;-webkit-text-stroke:0.2px #707070;">--</div><div class="t" id="r3c6" style="top:591.74px;font-size:12.3px;line-height:16px;font-weight:400;color:#707070;letter-spacing:0.261px;left:990.70px;width:600px;text-align:center;text-indent:0.261px;-webkit-text-stroke:0.2px #707070;">ARS 600,000.00</div><div class="t" id="r3c7" style="top:591.74px;font-size:12.3px;line-height:16px;font-weight:400;color:#707070;letter-spacing:-0.085px;left:1166.90px;width:600px;text-align:center;text-indent:-0.085px;-webkit-text-stroke:0.2px #707070;">ARS 663,279.10</div><div class="t" id="r4c1" style="top:650.74px;font-size:12.3px;line-height:16px;font-weight:400;color:#707070;letter-spacing:0.215px;left:191.80px;width:600px;text-align:center;text-indent:0.215px;-webkit-text-stroke:0.5px #707070;">Factura 0407_2</div><div class="t" id="r4c2" style="top:650.74px;font-size:12.3px;line-height:16px;font-weight:400;color:#707070;letter-spacing:0.120px;left:328.60px;width:600px;text-align:center;text-indent:0.120px;-webkit-text-stroke:0.2px #707070;">Veronica Perez</div><div class="t" id="r4c3" style="top:650.74px;font-size:12.3px;line-height:16px;font-weight:400;color:#707070;letter-spacing:0.788px;left:473.70px;width:600px;text-align:center;text-indent:0.788px;-webkit-text-stroke:0.2px #707070;">04/07/2024</div><div class="t" id="r4c4" style="top:650.74px;font-size:12.3px;line-height:16px;font-weight:400;color:#707070;letter-spacing:0.223px;left:662.10px;width:600px;text-align:center;text-indent:0.223px;-webkit-text-stroke:0.2px #707070;">04/11/2024</div><div class="t" id="r4c5" style="top:650.74px;font-size:12.3px;line-height:16px;font-weight:400;color:#707070;letter-spacing:2.205px;left:838.90px;width:600px;text-align:center;text-indent:2.205px;-webkit-text-stroke:0.2px #707070;">--</div><div class="t" id="r4c6" style="top:650.74px;font-size:12.3px;line-height:16px;font-weight:400;color:#707070;letter-spacing:0.261px;left:990.70px;width:600px;text-align:center;text-indent:0.261px;-webkit-text-stroke:0.2px #707070;">ARS 600,000.00</div><div class="t" id="r4c7" style="top:650.74px;font-size:12.3px;line-height:16px;font-weight:400;color:#707070;letter-spacing:-0.247px;left:1166.90px;width:600px;text-align:center;text-indent:-0.247px;-webkit-text-stroke:0.2px #707070;">ARS 610,041.67</div><div class="t" id="r5c1" style="top:709.74px;font-size:12.3px;line-height:16px;font-weight:400;color:#707070;letter-spacing:0.215px;left:191.80px;width:600px;text-align:center;text-indent:0.215px;-webkit-text-stroke:0.5px #707070;">Factura 0407_2</div><div class="t" id="r5c2" style="top:709.74px;font-size:12.3px;line-height:16px;font-weight:400;color:#707070;letter-spacing:0.120px;left:328.60px;width:600px;text-align:center;text-indent:0.120px;-webkit-text-stroke:0.2px #707070;">Veronica Perez</div><div class="t" id="r5c3" style="top:709.74px;font-size:12.3px;line-height:16px;font-weight:400;color:#707070;letter-spacing:0.788px;left:473.70px;width:600px;text-align:center;text-indent:0.788px;-webkit-text-stroke:0.2px #707070;">04/07/2024</div><div class="t" id="r5c4" style="top:709.74px;font-size:12.3px;line-height:16px;font-weight:400;color:#707070;letter-spacing:0.455px;left:662.10px;width:600px;text-align:center;text-indent:0.455px;-webkit-text-stroke:0.2px #707070;">04/10/2024</div><div class="t" id="r5c5" style="top:709.74px;font-size:12.3px;line-height:16px;font-weight:400;color:#707070;letter-spacing:0.455px;left:838.90px;width:600px;text-align:center;text-indent:0.455px;-webkit-text-stroke:0.2px #707070;">04/10/2024</div><div class="t" id="r5c6" style="top:709.74px;font-size:12.3px;line-height:16px;font-weight:400;color:#707070;letter-spacing:0.261px;left:990.70px;width:600px;text-align:center;text-indent:0.261px;-webkit-text-stroke:0.2px #707070;">ARS 600,000.00</div><div class="t" id="r5c7" style="top:709.74px;font-size:12.3px;line-height:16px;font-weight:400;color:#707070;letter-spacing:0.223px;left:1166.90px;width:600px;text-align:center;text-indent:0.223px;-webkit-text-stroke:0.2px #707070;">ARS 605,000.00</div><div class="t" id="r6c1" style="top:768.74px;font-size:12.3px;line-height:16px;font-weight:400;color:#707070;letter-spacing:0.230px;left:191.80px;width:600px;text-align:center;text-indent:0.230px;-webkit-text-stroke:0.5px #707070;">Factura 0407_base</div><div class="t" id="r6c2" style="top:768.74px;font-size:12.3px;line-height:16px;font-weight:400;color:#707070;letter-spacing:0.120px;left:328.60px;width:600px;text-align:center;text-indent:0.120px;-webkit-text-stroke:0.2px #707070;">Veronica Perez</div><div class="t" id="r6c3" style="top:768.74px;font-size:12.3px;line-height:16px;font-weight:400;color:#707070;letter-spacing:0.788px;left:473.70px;width:600px;text-align:center;text-indent:0.788px;-webkit-text-stroke:0.2px #707070;">04/07/2024</div><div class="t" id="r6c4" style="top:768.74px;font-size:12.3px;line-height:16px;font-weight:400;color:#707070;letter-spacing:0.455px;left:662.10px;width:600px;text-align:center;text-indent:0.455px;-webkit-text-stroke:0.2px #707070;">02/10/2024</div><div class="t" id="r6c5" style="top:768.74px;font-size:12.3px;line-height:16px;font-weight:400;color:#707070;letter-spacing:2.205px;left:838.90px;width:600px;text-align:center;text-indent:2.205px;-webkit-text-stroke:0.2px #707070;">--</div><div class="t" id="r6c6" style="top:768.74px;font-size:12.3px;line-height:16px;font-weight:400;color:#707070;letter-spacing:0.003px;left:990.70px;width:600px;text-align:center;text-indent:0.003px;-webkit-text-stroke:0.2px #707070;">ARS 10,000.00</div><div class="t" id="r6c7" style="top:768.74px;font-size:12.3px;line-height:16px;font-weight:400;color:#707070;letter-spacing:0.019px;left:1166.90px;width:600px;text-align:center;text-indent:0.019px;-webkit-text-stroke:0.2px #707070;">ARS 10,604.49</div><div class="t" id="r7c1" style="top:827.74px;font-size:12.3px;line-height:16px;font-weight:400;color:#707070;letter-spacing:0.444px;left:191.80px;width:600px;text-align:center;text-indent:0.444px;-webkit-text-stroke:0.5px #707070;">Factura 0407</div><div class="t" id="r7c2" style="top:827.74px;font-size:12.3px;line-height:16px;font-weight:400;color:#707070;letter-spacing:0.120px;left:328.60px;width:600px;text-align:center;text-indent:0.120px;-webkit-text-stroke:0.2px #707070;">Veronica Perez</div><div class="t" id="r7c3" style="top:827.74px;font-size:12.3px;line-height:16px;font-weight:400;color:#707070;letter-spacing:0.788px;left:473.70px;width:600px;text-align:center;text-indent:0.788px;-webkit-text-stroke:0.2px #707070;">04/07/2024</div><div class="t" id="r7c4" style="top:827.74px;font-size:12.3px;line-height:16px;font-weight:400;color:#707070;letter-spacing:-0.110px;left:662.10px;width:600px;text-align:center;text-indent:-0.110px;-webkit-text-stroke:0.2px #707070;">01/11/2024</div><div class="t" id="r7c5" style="top:827.74px;font-size:12.3px;line-height:16px;font-weight:400;color:#707070;letter-spacing:2.205px;left:838.90px;width:600px;text-align:center;text-indent:2.205px;-webkit-text-stroke:0.2px #707070;">--</div><div class="t" id="r7c6" style="top:827.74px;font-size:12.3px;line-height:16px;font-weight:400;color:#707070;letter-spacing:0.003px;left:990.70px;width:600px;text-align:center;text-indent:0.003px;-webkit-text-stroke:0.2px #707070;">ARS 10,000.00</div><div class="t" id="r7c7" style="top:827.74px;font-size:12.3px;line-height:16px;font-weight:400;color:#707070;letter-spacing:-0.347px;left:1166.90px;width:600px;text-align:center;text-indent:-0.347px;-webkit-text-stroke:0.2px #707070;">ARS 10,865.14</div><div class="t" id="r0b" style="top:414.00px;font-size:13px;line-height:17px;font-weight:400;color:#3f8a5a;letter-spacing:-0.250px;left:1332.00px;width:600px;text-align:center;text-indent:-0.250px;-webkit-text-stroke:0.2px #3f8a5a;">Aprobada</div><div class="t" id="r1b" style="top:473.00px;font-size:13px;line-height:17px;font-weight:400;color:#eea173;letter-spacing:0.036px;left:1332.00px;width:600px;text-align:center;text-indent:0.036px;-webkit-text-stroke:0.2px #eea173;">Moroso</div><div class="t" id="r2b" style="top:532.00px;font-size:13px;line-height:17px;font-weight:400;color:#eea173;letter-spacing:0.036px;left:1332.00px;width:600px;text-align:center;text-indent:0.036px;-webkit-text-stroke:0.2px #eea173;">Moroso</div><div class="t" id="r3b" style="top:591.00px;font-size:13px;line-height:17px;font-weight:400;color:#3d55b5;letter-spacing:-0.115px;left:1332.00px;width:600px;text-align:center;text-indent:-0.115px;-webkit-text-stroke:0.2px #3d55b5;">Pendiente</div><div class="t" id="r4b" style="top:650.00px;font-size:13px;line-height:17px;font-weight:400;color:#eea173;letter-spacing:0.036px;left:1332.00px;width:600px;text-align:center;text-indent:0.036px;-webkit-text-stroke:0.2px #eea173;">Moroso</div><div class="t" id="r5b" style="top:709.00px;font-size:13px;line-height:17px;font-weight:400;color:#2a9d8f;letter-spacing:0.026px;left:1332.00px;width:600px;text-align:center;text-indent:0.026px;-webkit-text-stroke:0.2px #2a9d8f;">Extendido</div><div class="t" id="r6b" style="top:768.00px;font-size:13px;line-height:17px;font-weight:400;color:#3f8a5a;letter-spacing:-0.250px;left:1332.00px;width:600px;text-align:center;text-indent:-0.250px;-webkit-text-stroke:0.2px #3f8a5a;">Aprobada</div><div class="t" id="r7b" style="top:827.00px;font-size:13px;line-height:17px;font-weight:400;color:#3d55b5;letter-spacing:-0.115px;left:1332.00px;width:600px;text-align:center;text-indent:-0.115px;-webkit-text-stroke:0.2px #3d55b5;">Pendiente</div><div class="t" id="tip" style="top:440.58px;font-size:14.5px;line-height:19px;font-weight:400;color:#fff;letter-spacing:0.315px;left:1694.20px;-webkit-text-stroke:0.25px #fff;">Solicitar refinanciación</div><div class="t" id="url" style="top:822.28px;font-size:14.5px;line-height:19px;font-weight:400;color:#2a2540;letter-spacing:0.257px;left:0.50px;">ttps://chile-qa.lend2b.com/buyer/Loan/Request-Refinance</div><div class="t" id="logo1" style="top:46.79px;font-size:8.4px;line-height:11px;font-weight:400;color:#333;letter-spacing:0.000px;left:80.50px;-webkit-text-stroke:0.45px #333;transform:scaleX(1.24);transform-origin:0 0;letter-spacing:0.8px;">LAPACHOS</div><div class="t" id="logo2" style="top:57.76px;font-size:5.6px;line-height:7px;font-weight:400;color:#333;letter-spacing:3.414px;left:90.00px;">LENDING</div>
</body></html>
